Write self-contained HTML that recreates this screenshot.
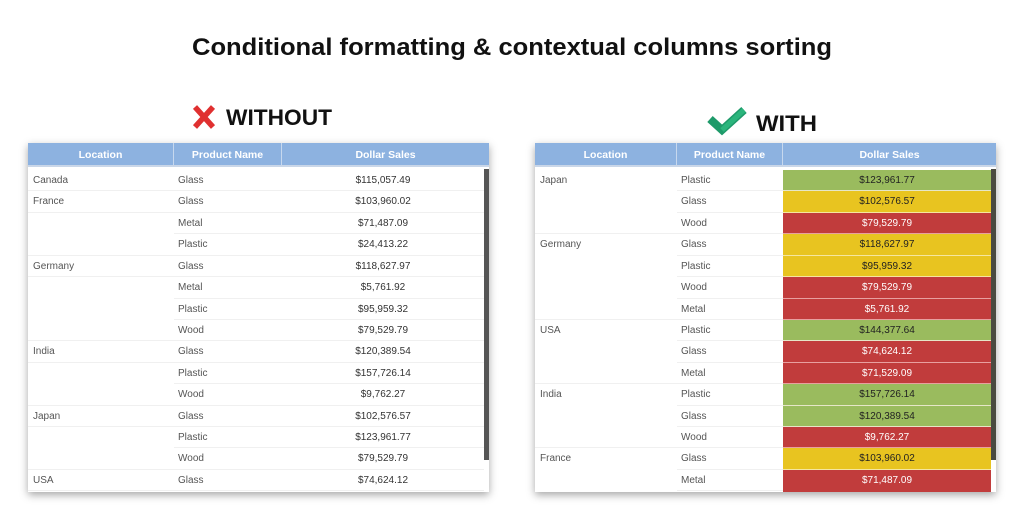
<!DOCTYPE html>
<html><head><meta charset="utf-8"><style>
*{margin:0;padding:0;box-sizing:border-box}
body{width:1024px;height:516px;background:#fff;position:relative;overflow:hidden;font-family:"Liberation Sans",sans-serif}
.tbl{position:absolute;top:143px;width:461px;height:349px;background:#fff;box-shadow:0 3px 8px rgba(0,0,0,.35)}
.hd{position:absolute;top:0;left:0;right:0;height:24px;background:#8db2e0;display:flex;color:#fff;font-weight:bold;font-size:10.5px;line-height:24px;border-bottom:2px solid #c9d6e8}
.hd div{text-align:center;border-right:1px solid #c7d8ee}
.rows{position:absolute;top:27px;left:0;right:0}
.r{height:21.43px;display:flex;font-size:10px;color:#555;line-height:21px}
.r div{border-bottom:1px solid #f0f0f0}
.c1{padding-left:5px}.c2{padding-left:4px}.c3{text-align:center;color:#333}
.sb{position:absolute;width:5px;background:#555}
.g{background:#9abb5e;color:#222!important;border-bottom:1px solid #e6e6c8!important}
.y{background:#e8c420;color:#222!important;border-bottom:1px solid #f5e6a0!important}
.d{background:#c13c3c;color:#fff!important;border-bottom:1px solid #e8a0a0!important}
</style></head><body>
<svg width="1024" height="140" style="position:absolute;left:0;top:0">
<text x="192" y="55" textLength="640" lengthAdjust="spacingAndGlyphs" font-family="Liberation Sans" font-weight="bold" font-size="24" fill="#111">Conditional formatting &amp; contextual columns sorting</text>
<path d="M195 107 L213 127 M213 107 L195 127" stroke="#e03030" stroke-width="5.5" stroke-linecap="butt"/>
<text x="226" y="125" textLength="106" lengthAdjust="spacingAndGlyphs" font-family="Liberation Sans" font-weight="bold" font-size="22" fill="#111">WITHOUT</text>
<path d="M710 119 L722 130 L744 110" stroke="#1e9a6a" stroke-width="8" fill="none"/>
<path d="M722 130 L744 110" stroke="#2bb57c" stroke-width="5" fill="none"/>
<text x="756" y="131" textLength="61" lengthAdjust="spacingAndGlyphs" font-family="Liberation Sans" font-weight="bold" font-size="22" fill="#111">WITH</text>
</svg>

<div class="tbl" style="left:28px">
<div class="hd"><div style="width:146px">Location</div><div style="width:108px">Product Name</div><div style="width:207px;border:none">Dollar Sales</div></div>
<div class="rows">
<div class="r"><div class="c1" style="width:146px">Canada</div><div class="c2" style="width:108px">Glass</div><div class="c3" style="width:202px">$115,057.49</div></div>
<div class="r"><div class="c1" style="width:146px">France</div><div class="c2" style="width:108px">Glass</div><div class="c3" style="width:202px">$103,960.02</div></div>
<div class="r"><div class="c1" style="width:146px;border:none"></div><div class="c2" style="width:108px">Metal</div><div class="c3" style="width:202px">$71,487.09</div></div>
<div class="r"><div class="c1" style="width:146px"></div><div class="c2" style="width:108px">Plastic</div><div class="c3" style="width:202px">$24,413.22</div></div>
<div class="r"><div class="c1" style="width:146px">Germany</div><div class="c2" style="width:108px">Glass</div><div class="c3" style="width:202px">$118,627.97</div></div>
<div class="r"><div class="c1" style="width:146px;border:none"></div><div class="c2" style="width:108px">Metal</div><div class="c3" style="width:202px">$5,761.92</div></div>
<div class="r"><div class="c1" style="width:146px;border:none"></div><div class="c2" style="width:108px">Plastic</div><div class="c3" style="width:202px">$95,959.32</div></div>
<div class="r"><div class="c1" style="width:146px"></div><div class="c2" style="width:108px">Wood</div><div class="c3" style="width:202px">$79,529.79</div></div>
<div class="r"><div class="c1" style="width:146px">India</div><div class="c2" style="width:108px">Glass</div><div class="c3" style="width:202px">$120,389.54</div></div>
<div class="r"><div class="c1" style="width:146px;border:none"></div><div class="c2" style="width:108px">Plastic</div><div class="c3" style="width:202px">$157,726.14</div></div>
<div class="r"><div class="c1" style="width:146px"></div><div class="c2" style="width:108px">Wood</div><div class="c3" style="width:202px">$9,762.27</div></div>
<div class="r"><div class="c1" style="width:146px">Japan</div><div class="c2" style="width:108px">Glass</div><div class="c3" style="width:202px">$102,576.57</div></div>
<div class="r"><div class="c1" style="width:146px;border:none"></div><div class="c2" style="width:108px">Plastic</div><div class="c3" style="width:202px">$123,961.77</div></div>
<div class="r"><div class="c1" style="width:146px"></div><div class="c2" style="width:108px">Wood</div><div class="c3" style="width:202px">$79,529.79</div></div>
<div class="r"><div class="c1" style="width:146px">USA</div><div class="c2" style="width:108px">Glass</div><div class="c3" style="width:202px">$74,624.12</div></div>
</div>
<div class="sb" style="left:456px;top:26px;height:291px"></div>
</div>

<div class="tbl" style="left:535px">
<div class="hd"><div style="width:142px">Location</div><div style="width:106px">Product Name</div><div style="width:213px;border:none">Dollar Sales</div></div>
<div class="rows">
<div class="r"><div class="c1" style="width:142px;border:none">Japan</div><div class="c2" style="width:106px">Plastic</div><div class="c3 g" style="width:208px">$123,961.77</div></div>
<div class="r"><div class="c1" style="width:142px;border:none"></div><div class="c2" style="width:106px">Glass</div><div class="c3 y" style="width:208px">$102,576.57</div></div>
<div class="r"><div class="c1" style="width:142px"></div><div class="c2" style="width:106px">Wood</div><div class="c3 d" style="width:208px">$79,529.79</div></div>
<div class="r"><div class="c1" style="width:142px;border:none">Germany</div><div class="c2" style="width:106px">Glass</div><div class="c3 y" style="width:208px">$118,627.97</div></div>
<div class="r"><div class="c1" style="width:142px;border:none"></div><div class="c2" style="width:106px">Plastic</div><div class="c3 y" style="width:208px">$95,959.32</div></div>
<div class="r"><div class="c1" style="width:142px;border:none"></div><div class="c2" style="width:106px">Wood</div><div class="c3 d" style="width:208px">$79,529.79</div></div>
<div class="r"><div class="c1" style="width:142px"></div><div class="c2" style="width:106px">Metal</div><div class="c3 d" style="width:208px">$5,761.92</div></div>
<div class="r"><div class="c1" style="width:142px;border:none">USA</div><div class="c2" style="width:106px">Plastic</div><div class="c3 g" style="width:208px">$144,377.64</div></div>
<div class="r"><div class="c1" style="width:142px;border:none"></div><div class="c2" style="width:106px">Glass</div><div class="c3 d" style="width:208px">$74,624.12</div></div>
<div class="r"><div class="c1" style="width:142px"></div><div class="c2" style="width:106px">Metal</div><div class="c3 d" style="width:208px">$71,529.09</div></div>
<div class="r"><div class="c1" style="width:142px;border:none">India</div><div class="c2" style="width:106px">Plastic</div><div class="c3 g" style="width:208px">$157,726.14</div></div>
<div class="r"><div class="c1" style="width:142px;border:none"></div><div class="c2" style="width:106px">Glass</div><div class="c3 g" style="width:208px">$120,389.54</div></div>
<div class="r"><div class="c1" style="width:142px"></div><div class="c2" style="width:106px">Wood</div><div class="c3 d" style="width:208px">$9,762.27</div></div>
<div class="r"><div class="c1" style="width:142px;border:none">France</div><div class="c2" style="width:106px">Glass</div><div class="c3 y" style="width:208px">$103,960.02</div></div>
<div class="r"><div class="c1" style="width:142px;border:none"></div><div class="c2" style="width:106px">Metal</div><div class="c3 d" style="width:208px">$71,487.09</div></div>
</div>
<div style="position:absolute;left:248px;top:346px;width:208px;height:3px;background:#c13c3c"></div>
<div class="sb" style="left:456px;top:26px;height:291px;background:#4a4a40"></div>
</div>
</body></html>
